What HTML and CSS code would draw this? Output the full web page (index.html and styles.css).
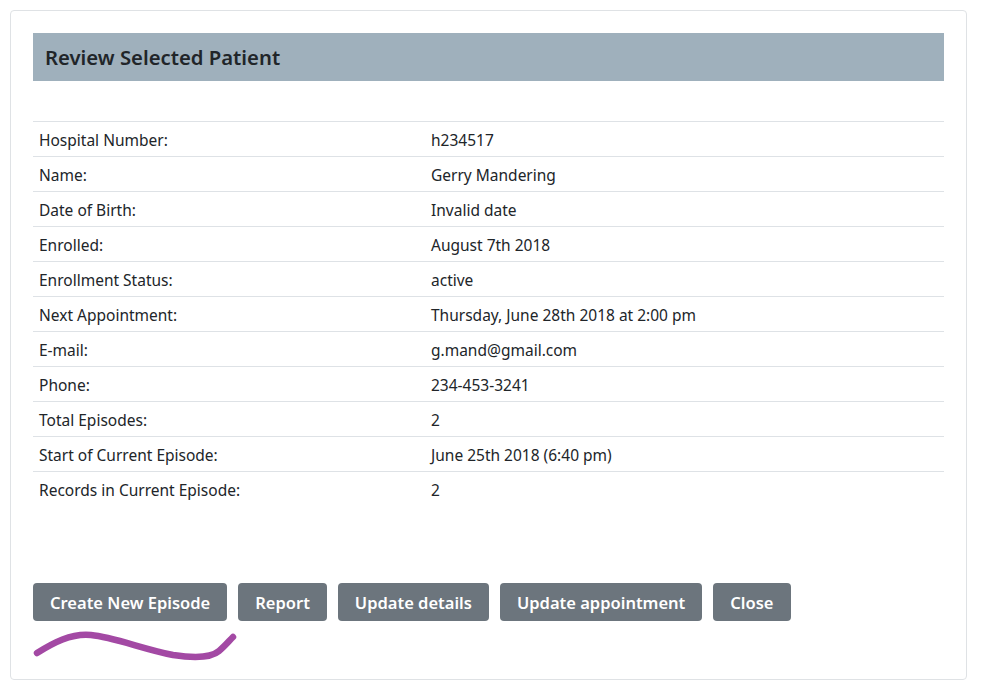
FILE: index.html
```html
<!DOCTYPE html>
<html>
<head>
<meta charset="utf-8">
<link rel="stylesheet" href="styles.css">
</head>
<body>
<div class="card">
  <div class="header"><h2 class="title">Review Selected Patient</h2></div>
  <table class="details">
    <tr><td class="label">Hospital Number:</td><td>h234517</td></tr>
    <tr><td class="label">Name:</td><td>Gerry Mandering</td></tr>
    <tr><td class="label">Date of Birth:</td><td>Invalid date</td></tr>
    <tr><td class="label">Enrolled:</td><td>August 7th 2018</td></tr>
    <tr><td class="label">Enrollment Status:</td><td>active</td></tr>
    <tr><td class="label">Next Appointment:</td><td>Thursday, June 28th 2018 at 2:00 pm</td></tr>
    <tr><td class="label">E-mail:</td><td>g.mand@gmail.com</td></tr>
    <tr><td class="label">Phone:</td><td>234-453-3241</td></tr>
    <tr><td class="label">Total Episodes:</td><td>2</td></tr>
    <tr><td class="label">Start of Current Episode:</td><td>June 25th 2018 (6:40 pm)</td></tr>
    <tr><td class="label">Records in Current Episode:</td><td>2</td></tr>
  </table>
  <div class="actions">
    <button class="btn">Create New Episode</button>
    <button class="btn">Report</button>
    <button class="btn">Update details</button>
    <button class="btn">Update appointment</button>
    <button class="btn">Close</button>
  </div>
  <svg class="squiggle" width="210" height="40" viewBox="0 0 210 40">
    <path d="M4 26 C 20 16, 38 6, 58 8 C 80 10, 110 22, 140 28 C 160 31, 178 31, 186 24 C 192 19, 196 14, 200 10" fill="none" stroke="#a349a4" stroke-width="6.5" stroke-linecap="round"/>
  </svg>
</div>
</body>
</html>
```
FILE: styles.css
```css
html, body {
  margin: 0;
  padding: 0;
  background: #fff;
}
body {
  padding: 10px 15px 0 10px;
  font-family: "Noto Sans", "Open Sans", sans-serif;
  color: #212529;
}
.card {
  width: 957px;
  height: 670px;
  box-sizing: border-box;
  border: 1px solid #dfe2e5;
  border-radius: 4px;
  padding: 22px 22px 0 22px;
}
.header {
  background: #9fb0bc;
  height: 48px;
  display: flex;
  align-items: center;
  padding: 0 12px;
}
.title {
  margin: 0;
  font-size: 20.3px;
  font-weight: 600;
  color: #212529;
}
.details {
  margin-top: 40px;
  width: 100%;
  border-collapse: collapse;
  font-size: 15.5px;
}
.details td {
  border-top: 1px solid #dee2e6;
  height: 33px;
  padding: 1px 6px 0 6px;
  vertical-align: middle;
}
.details td.label {
  width: 380px;
}
.actions {
  margin-top: 77px;
  display: flex;
  gap: 11px;
}
.btn {
  background: #6c757d;
  color: #fff;
  border: none;
  border-radius: 4px;
  height: 38px;
  padding: 0 17px;
  font-family: "Noto Sans", "Open Sans", sans-serif;
  font-size: 16.5px;
  font-weight: 600;
}
.squiggle {
  display: block;
  margin-top: 6px;
  margin-left: 0;
}
```
